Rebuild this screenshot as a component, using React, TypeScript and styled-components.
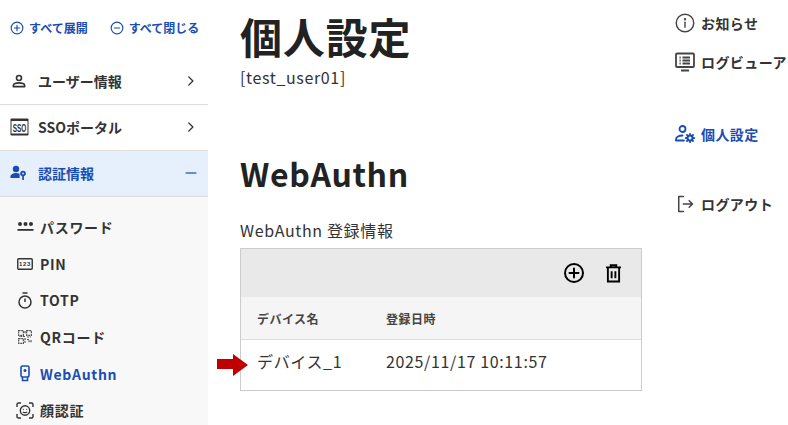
import React from "react";
import styled, { createGlobalStyle } from "styled-components";

const Global = createGlobalStyle`
  html, body { margin: 0; padding: 0; height: 100%; background: #fff; overflow: hidden; }
  body { font-family: "Noto Sans CJK JP", "Noto Sans", sans-serif; color: #222; }
  #root { height: 425px; overflow: hidden; }
`;

const BLUE = "#1a4db3";

const Page = styled.div`
  display: grid;
  grid-template-columns: 208px 467px 113px;
  width: 788px;
  height: 425px;
  overflow: hidden;
`;

const Sidebar = styled.aside`
  display: flex;
  flex-direction: column;
`;

const ExpandBar = styled.div`
  display: flex;
  align-items: center;
  height: 59px;
  padding-left: 10px;
  gap: 22px;
  box-sizing: border-box;
  padding-bottom: 3px;
`;

const ExpandAction = styled.a`
  display: flex;
  align-items: center;
  gap: 5px;
  font-size: 12px;
  font-weight: 700;
  color: ${BLUE};
  line-height: 16px;
`;

const AccordionRow = styled.div<{ $active?: boolean }>`
  display: flex;
  align-items: center;
  height: 46px;
  box-sizing: border-box;
  padding: 0 8px 2px 9px;
  border-bottom: 1px solid #dcdcdc;
  background: ${(p) => (p.$active ? "#e6f0fc" : "#fff")};
  color: ${(p) => (p.$active ? BLUE : "#333")};
  font-size: 14px;
  font-weight: 700;
`;

const RowIcon = styled.span`
  display: flex;
  align-items: center;
  justify-content: center;
  width: 20px;
  margin-right: 9px;
`;

const RowLabel = styled.span`
  flex: 1;
`;

const SubList = styled.div`
  flex: 1;
  background: #f8f8f8;
  padding-top: 12px;
  display: flex;
  flex-direction: column;
`;

const SubItem = styled.div<{ $active?: boolean }>`
  display: flex;
  align-items: center;
  height: 36.6px;
  padding-left: 16px;
  font-size: 14px;
  font-weight: 700;
  letter-spacing: 0.05em;
  color: ${(p) => (p.$active ? BLUE : "#333")};
`;

const SubIcon = styled.span`
  display: flex;
  align-items: center;
  justify-content: center;
  width: 18px;
  margin-right: 6px;
`;

const Main = styled.main`
  padding: 0 0 0 32px;
  display: flex;
  flex-direction: column;
`;

const Title = styled.h1`
  margin: 7px 0 0;
  font-size: 42px;
  line-height: 58px;
  font-weight: 700;
  letter-spacing: 0.02em;
  color: #222;
`;

const UserId = styled.div`
  margin-top: 2px;
  font-size: 16px;
  line-height: 20px;
  letter-spacing: 0.04em;
  color: #333;
`;

const Heading = styled.h2`
  margin: 63px 0 0;
  font-size: 32px;
  line-height: 46px;
  font-weight: 700;
  letter-spacing: 0.02em;
  color: #222;
`;

const TableLabel = styled.div`
  margin-top: 22px;
  font-size: 16px;
  line-height: 24px;
  letter-spacing: 0.04em;
  color: #333;
`;

const TableWrap = styled.div`
  position: relative;
  width: 402px;
  margin-top: 6px;
`;

const Arrow = styled.svg`
  position: absolute;
  left: -23px;
  top: 106px;
`;

const TableBox = styled.div`
  border: 1px solid #ccc;
  box-sizing: border-box;
`;

const Toolbar = styled.div`
  display: flex;
  align-items: center;
  justify-content: flex-end;
  gap: 20px;
  height: 48px;
  padding-right: 20px;
  background: #e9e9e9;
`;

const Cols = styled.div<{ $head?: boolean }>`
  display: grid;
  grid-template-columns: 129px 1fr;
  align-items: center;
  padding-left: 16px;
  box-sizing: border-box;
  height: ${(p) => (p.$head ? "43px" : "50px")};
  padding-bottom: ${(p) => (p.$head ? "0" : "8px")};
  background: ${(p) => (p.$head ? "#f5f5f5" : "#fff")};
  border-bottom: ${(p) => (p.$head ? "1px solid #ddd" : "none")};
  font-size: ${(p) => (p.$head ? "12px" : "16px")};
  font-weight: ${(p) => (p.$head ? 700 : 400)};
  letter-spacing: 0.04em;
  color: ${(p) => (p.$head ? "#444" : "#333")};
`;

const RightNav = styled.nav`
  display: flex;
  flex-direction: column;
`;

const NavItem = styled.a<{ $active?: boolean; $top: number }>`
  display: flex;
  align-items: center;
  gap: 6px;
  margin-top: ${(p) => p.$top}px;
  height: 20px;
  font-size: 14px;
  font-weight: 700;
  letter-spacing: 0.03em;
  white-space: nowrap;
  color: ${(p) => (p.$active ? BLUE : "#333")};
`;

const Svg = ({ size = 20, children, color = "currentColor", sw = 1.6 }: { size?: number; children: React.ReactNode; color?: string; sw?: number }) => (
  <svg width={size} height={size} viewBox="0 0 24 24" fill="none" stroke={color} strokeWidth={sw} strokeLinecap="round" strokeLinejoin="round">
    {children}
  </svg>
);

const Chevron = () => (
  <Svg size={18} sw={1.8}><path d="M9 6.500 14.500 12 9 17.500" /></Svg>
);

export default function App() {
  return (
    <Page>
      <Global />
      <Sidebar>
        <ExpandBar>
          <ExpandAction>
            <Svg size={14} sw={2}><circle cx="12" cy="12" r="10" /><path d="M12 7.500v9M7.500 12h9" /></Svg>
            すべて展開
          </ExpandAction>
          <ExpandAction>
            <Svg size={14} sw={2}><circle cx="12" cy="12" r="10" /><path d="M7.500 12h9" /></Svg>
            すべて閉じる
          </ExpandAction>
        </ExpandBar>
        <AccordionRow>
          <RowIcon>
            <Svg size={18} sw={2.2}><circle cx="12" cy="8" r="3.300" /><path d="M4.500 19.500v-2c0-1.500 3.500-3 7.500-3s7.500 1.500 7.500 3v2z" /></Svg>
          </RowIcon>
          <RowLabel>ユーザー情報</RowLabel>
          <Chevron />
        </AccordionRow>
        <AccordionRow>
          <RowIcon>
            <svg width="19" height="18" viewBox="0 0 19 18">
              <rect x="0.500" y="0.500" width="18" height="17" rx="1" fill="#333" />
              <rect x="1.500" y="3" width="16" height="12.500" fill="#fff" />
              <text transform="translate(9.500 13.500) scale(0.65 1.100)" textAnchor="middle" fontSize="10" fontFamily="Liberation Sans, sans-serif" fill="#333">SSO</text>
            </svg>
          </RowIcon>
          <RowLabel>SSOポータル</RowLabel>
          <Chevron />
        </AccordionRow>
        <AccordionRow $active>
          <RowIcon>
            <svg width="18" height="16" viewBox="0 0 18 16" fill={BLUE}>
              <circle cx="6" cy="4" r="3.200" />
              <path d="M0.500 13v-1.500C0.500 9.500 3.500 8 6 8c1.300 0 2.600.3 3.600.8V13z" />
              <circle cx="13" cy="8.500" r="2.800" />
              <rect x="12.200" y="10" width="1.700" height="5" />
              <circle cx="13" cy="8.500" r="0.900" fill="#e6f0fc" />
            </svg>
          </RowIcon>
          <RowLabel>認証情報</RowLabel>
          <Svg size={18} sw={1.800} color="#3d6fc4"><path d="M5.500 12h13" /></Svg>
        </AccordionRow>
        <SubList>
          <SubItem>
            <SubIcon>
              <svg width="17" height="12" viewBox="0 0 17 12" fill="#333">
                <circle cx="3" cy="3" r="2" /><circle cx="8.500" cy="3" r="2" /><circle cx="14" cy="3" r="2" />
                <rect x="0.500" y="8" width="16" height="1.800" />
              </svg>
            </SubIcon>
            パスワード
          </SubItem>
          <SubItem>
            <SubIcon>
              <svg width="16" height="12" viewBox="0 0 16 12">
                <rect x="0.750" y="0.750" width="14.500" height="10.500" rx="1" fill="none" stroke="#333" strokeWidth="1.400" />
                <text x="8" y="8.300" textAnchor="middle" fontSize="6" fontFamily="Liberation Sans, sans-serif" fill="#333">123</text>
              </svg>
            </SubIcon>
            PIN
          </SubItem>
          <SubItem>
            <SubIcon>
              <svg width="16" height="17" viewBox="0 0 16 17" fill="none" stroke="#333" strokeWidth="1.500">
                <circle cx="8" cy="10" r="6" />
                <path d="M5.500 1h5M8 6.500V10" />
              </svg>
            </SubIcon>
            TOTP
          </SubItem>
          <SubItem>
            <SubIcon>
              <svg width="14" height="14" viewBox="0 0 14 14" fill="none" stroke="#555" strokeWidth="1.200" strokeDasharray="2 0.700">
                <rect x="0.600" y="0.600" width="4.800" height="4.800" /><rect x="8.600" y="0.600" width="4.800" height="4.800" /><rect x="0.600" y="8.600" width="4.800" height="4.800" />
                <path d="M7 1v3M7 6.500H1M9 7h4M7 8v5M9 9.500h2v3M13 10v3" />
              </svg>
            </SubIcon>
            QRコード
          </SubItem>
          <SubItem $active>
            <SubIcon>
              <svg width="10" height="17" viewBox="0 0 10 17" fill="none" stroke={BLUE} strokeWidth="1.600">
                <rect x="1" y="1" width="8" height="11" rx="1.500" />
                <circle cx="5" cy="5.500" r="1.500" fill={BLUE} stroke="none" />
                <path d="M2.500 12v3.500h5V12" />
              </svg>
            </SubIcon>
            WebAuthn
          </SubItem>
          <SubItem>
            <SubIcon>
              <svg width="18" height="17" viewBox="0 0 18 17" fill="none" stroke="#333" strokeWidth="1.400">
                <path d="M1 5V2.500C1 1.600 1.600 1 2.500 1H5M13 1h2.500c.9 0 1.500.6 1.500 1.500V5M17 12v2.500c0 .9-.6 1.500-1.500 1.500H13M5 16H2.500C1.600 16 1 15.400 1 14.500V12" />
                <circle cx="9" cy="8.500" r="4.700" />
                <path d="M6.800 9.800c1 1.100 3.400 1.100 4.400 0" strokeWidth="1.100" />
                <circle cx="7.300" cy="7.300" r="0.600" fill="#333" stroke="none" /><circle cx="10.700" cy="7.300" r="0.600" fill="#333" stroke="none" />
              </svg>
            </SubIcon>
            顔認証
          </SubItem>
        </SubList>
      </Sidebar>
      <Main>
        <Title>個人設定</Title>
        <UserId>[test_user01]</UserId>
        <Heading>WebAuthn</Heading>
        <TableLabel>WebAuthn 登録情報</TableLabel>
        <TableWrap>
          <Arrow width="32" height="22" viewBox="0 0 32 22">
            <path d="M0 5h16V0l15 11-15 11v-7H0z" fill="#c00000" />
          </Arrow>
          <TableBox>
            <Toolbar>
              <Svg size={24} color="#000" sw={2}><circle cx="12" cy="12" r="9" /><path d="M12 7.500v9M7.500 12h9" /></Svg>
              <svg width="15" height="19" viewBox="0 0 16 20" fill="none" stroke="#000" strokeWidth="2">
                <path d="M0 3.500h16M5 3V1.200h6V3M2 4v14.500h12V4M6 7.500v7.500M10 7.500v7.500" />
              </svg>
            </Toolbar>
            <Cols $head><span>デバイス名</span><span>登録日時</span></Cols>
            <Cols><span>デバイス_1</span><span>2025/11/17 10:11:57</span></Cols>
          </TableBox>
        </TableWrap>
      </Main>
      <RightNav>
        <NavItem $top={13}>
          <Svg size={20} color="#444" sw={1.700}><circle cx="12" cy="12" r="10.500" /><path d="M12 11v6" /><circle cx="12" cy="7.500" r="0.600" fill="#444" /></Svg>
          お知らせ
        </NavItem>
        <NavItem $top={19}>
          <svg width="20" height="20" viewBox="0 0 20 20" fill="none" stroke="#444" strokeWidth="1.800">
            <rect x="1" y="1.500" width="18" height="13.500" rx="1" />
            <path d="M6 18.500h8M7.500 5.500H15M7.500 8.500H15M7.500 11.500H15M4.500 5.500h1.200M4.500 8.500h1.200M4.500 11.500h1.200" />
          </svg>
          ログビューア
        </NavItem>
        <NavItem $top={52} $active>
          <svg width="20" height="20" viewBox="0 0 20 20" fill="none" stroke={BLUE} strokeWidth="1.800" strokeLinecap="round">
            <circle cx="7.500" cy="5" r="3" />
            <path d="M1 16.500v-1c0-2.500 3-4 6.500-4M1 16.500h8" />
            <circle cx="15" cy="14" r="2.500" strokeWidth="2" />
            <path d="M15 9.800v1.400M15 16.800v1.400M10.800 14h1.400M17.800 14h1.400M12 11l1 1M17 16l1 1M12 17l1-1M17 12l1-1" strokeWidth="1.800" />
          </svg>
          個人設定
        </NavItem>
        <NavItem $top={50}>
          <Svg size={20} color="#444" sw={1.800}><path d="M10 3H4.500v18H10M10 12h11M17 8l4 4-4 4" /></Svg>
          ログアウト
        </NavItem>
      </RightNav>
    </Page>
  );
}
